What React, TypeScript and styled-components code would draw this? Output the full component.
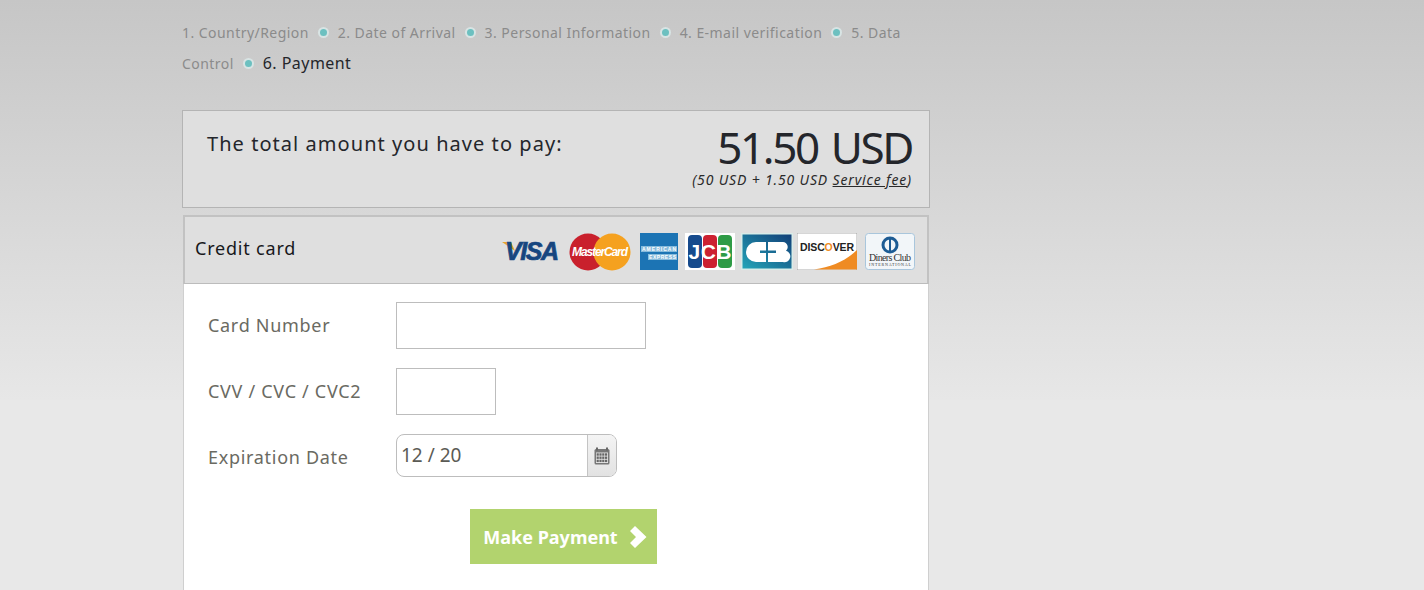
import React from "react"
import styled, { createGlobalStyle } from "styled-components"

const STEPS = ["1. Country/Region", "2. Date of Arrival", "3. Personal Information", "4. E-mail verification"]

const GlobalStyle = createGlobalStyle`
   html, body {
      margin: 0;
      padding: 0;
      height: 590px;
      overflow: hidden;
   }
   body {
      font-family: "Noto Sans", "Open Sans", sans-serif;
      background: linear-gradient(to bottom, #c6c6c6 0, #e7e7e7 400px, #e8e8e8 400px, #e8e8e8 590px);
   }
`

function VisaLogo() {
   return (
      <svg width="58" height="28" viewBox="0 0 58 28">
         <path d="M0 4 L9 4 L13 13 Z" fill="#e6a52d" />
         <text x="3" y="22" fontFamily="Liberation Sans" fontSize="25" fontWeight="700" fontStyle="italic" fill="#17467f" stroke="#17467f" strokeWidth="0.7" textLength="54">
            VISA
         </text>
      </svg>
   )
}

function MasterCardLogo() {
   return (
      <svg width="62" height="38" viewBox="0 0 62 38">
         <circle cx="19" cy="19" r="18.5" fill="#c9202c" />
         <circle cx="43" cy="19" r="18.5" fill="#f5a11f" />
         <text x="31" y="23" textAnchor="middle" fontFamily="Liberation Sans" fontSize="12" fontWeight="700" fontStyle="italic" fill="#fff" textLength="56">
            MasterCard
         </text>
      </svg>
   )
}

function AmexLogo() {
   return (
      <svg width="38" height="37" viewBox="0 0 38 37">
         <rect width="38" height="37" fill="#1c74b4" />
         <rect x="1" y="13" width="36" height="6" fill="#a9d3ea" opacity="0.75" />
         <rect x="8" y="21" width="29" height="6" fill="#a9d3ea" opacity="0.75" />
         <text x="2" y="18" fontFamily="Liberation Sans" fontSize="5" fontWeight="700" fill="#fff" textLength="34">
            AMERICAN
         </text>
         <text x="9" y="26" fontFamily="Liberation Sans" fontSize="5" fontWeight="700" fill="#fff" textLength="27">
            EXPRESS
         </text>
      </svg>
   )
}

function JcbLogo() {
   return (
      <svg width="50" height="37" viewBox="0 0 50 37">
         <rect width="50" height="37" fill="#fff" />
         <rect x="3" y="2" width="14" height="33" rx="4" fill="#164a8c" />
         <rect x="18" y="2" width="14" height="33" rx="4" fill="#cc2131" />
         <rect x="33" y="2" width="14" height="33" rx="4" fill="#2e9b46" />
         <text x="25" y="26" textAnchor="middle" fontFamily="Liberation Sans" fontSize="21" fontWeight="700" fill="#fff" textLength="43">
            JCB
         </text>
      </svg>
   )
}

function CbLogo() {
   return (
      <svg width="52" height="37" viewBox="0 0 52 37">
         <defs>
            <linearGradient id="cbFill" x1="0" y1="1" x2="1" y2="0">
               <stop offset="0" stopColor="#23a5b8" />
               <stop offset="1" stopColor="#123f78" />
            </linearGradient>
         </defs>
         <rect width="52" height="37" fill="#d8ece8" />
         <rect x="1.5" y="1.5" width="49" height="34" fill="url(#cbFill)" />
         <path d="M25 9 H15 a10 10 0 0 0 0 20 H25 V20 H19 V17.5 H25 Z" fill="#fff" />
         <path d="M27 9 H42 a5 5 0 0 1 3 8.7 a5.5 5.5 0 0 1 -3 11.3 H27 V20 H35 V17.5 H27 Z" fill="#fff" />
      </svg>
   )
}

function DiscoverLogo() {
   return (
      <svg width="60" height="37" viewBox="0 0 60 37">
         <rect width="60" height="37" fill="#fff" stroke="#777" strokeWidth="0.6" />
         <path d="M60 17 V36.5 H17 C35 34 50 27 60 17 Z" fill="#ef8b23" />
         <text x="30" y="18" textAnchor="middle" fontFamily="Liberation Sans" fontSize="10.5" fontWeight="700" fill="#222" textLength="54">
            DISC<tspan fill="#ef8b23">O</tspan>VER
         </text>
      </svg>
   )
}

function DinersLogo() {
   return (
      <svg width="50" height="37" viewBox="0 0 50 37">
         <rect x="0.5" y="0.5" width="49" height="36" rx="3" fill="#f2f6f9" stroke="#a9c6dc" />
         <circle cx="25" cy="12" r="8.5" fill="#1d5c94" />
         <circle cx="25" cy="12" r="5.5" fill="#f2f6f9" />
         <rect x="24" y="5.5" width="2" height="13" fill="#1d5c94" />
         <text x="25" y="28" textAnchor="middle" fontFamily="Liberation Serif" fontSize="10" fill="#333" textLength="42">
            Diners Club
         </text>
         <text x="25" y="33" textAnchor="middle" fontFamily="Liberation Serif" fontSize="4" fill="#333" textLength="42">
            INTERNATIONAL
         </text>
      </svg>
   )
}

function CalendarIcon() {
   return (
      <svg width="16" height="18" viewBox="0 0 16 18">
         <rect x="0.5" y="2" width="15" height="15.5" rx="1.5" fill="#777" />
         <rect x="2" y="0.5" width="2" height="3" fill="#666" />
         <rect x="12" y="0.5" width="2" height="3" fill="#666" />
         <rect x="2" y="5.5" width="12" height="10.5" fill="#e8e8e8" />
         {[0, 1, 2, 3].map(col =>
            [0, 1, 2].map(row => (
               <rect
                  key={`${col}-${row}`}
                  x={2.6 + col * 2.8}
                  y={6.3 + row * 3.2}
                  width="2.2"
                  height="2.4"
                  fill="#666"
               />
            ))
         )}
      </svg>
   )
}

function App() {
   return (
      <>
         <GlobalStyle />
         <Page>
            <Steps>
               {STEPS.map((step, index) => (
                  <React.Fragment key={index}>
                     <Step>{step}</Step>
                     <Dot />
                  </React.Fragment>
               ))}
               <Step>5. Data</Step> <Step>Control</Step>
               <Dot />
               <Step $active>6. Payment</Step>
            </Steps>

            <TotalBox>
               <TotalLabel>The total amount you have to pay:</TotalLabel>
               <TotalRight>
                  <Amount>51.50 USD</Amount>
                  <Breakdown>
                     (50 USD + 1.50 USD <u>Service fee</u>)
                  </Breakdown>
               </TotalRight>
            </TotalBox>

            <CardHeader>
               <CardTitle>Credit card</CardTitle>
               <Logos>
                  <LogoSlot $gap={0}><VisaLogo /></LogoSlot>
                  <LogoSlot $gap={9}><MasterCardLogo /></LogoSlot>
                  <LogoSlot $gap={9}><AmexLogo /></LogoSlot>
                  <LogoSlot $gap={7}><JcbLogo /></LogoSlot>
                  <LogoSlot $gap={6}><CbLogo /></LogoSlot>
                  <LogoSlot $gap={4}><DiscoverLogo /></LogoSlot>
                  <LogoSlot $gap={8}><DinersLogo /></LogoSlot>
               </Logos>
            </CardHeader>

            <FormPanel>
               <Row>
                  <Label>Card Number</Label>
                  <TextBox $width={250} />
               </Row>
               <Row>
                  <Label>CVV / CVC / CVC2</Label>
                  <TextBox $width={100} />
               </Row>
               <Row>
                  <Label>Expiration Date</Label>
                  <DateField>
                     <DateValue>12 / 20</DateValue>
                     <DateButton>
                        <CalendarIcon />
                     </DateButton>
                  </DateField>
               </Row>
               <PayButton>
                  Make Payment
                  <svg width="17" height="22" viewBox="0 0 17 22">
                     <path d="M0 5 L5 0 L16.5 11 L5 22 L0 17 L6 11 Z" fill="#fff" />
                  </svg>
               </PayButton>
            </FormPanel>
         </Page>
      </>
   )
}

const Page = styled.div`
   width: 748px;
   margin-left: 182px;
   padding-top: 17px;
`

const Steps = styled.div`
   width: 730px;
   line-height: 31px;
   font-size: 14px;
   letter-spacing: 0.45px;
   margin-bottom: 31px;
`

const Step = styled.span<{ $active?: boolean }>`
   color: ${({ $active }) => ($active ? "#24262b" : "#8b8b8b")};
   font-size: ${({ $active }) => ($active ? "16px" : "14px")};
`

const Dot = styled.span`
   display: inline-block;
   width: 7px;
   height: 7px;
   margin: 0 11px 2px 11px;
   border-radius: 50%;
   background: #6cc0c0;
   box-shadow: 0 0 0 2px #d8e4e4;
`

const TotalBox = styled.div`
   box-sizing: border-box;
   height: 98px;
   display: flex;
   justify-content: space-between;
   padding: 14px 17px 0 24px;
   background: #dfdfdf;
   border: 1px solid #b4b4b4;
`

const TotalLabel = styled.div`
   font-size: 20px;
   letter-spacing: 1.05px;
   line-height: 38px;
   color: #24262b;
`

const TotalRight = styled.div`
   text-align: right;
`

const Amount = styled.div`
   font-size: 44px;
   line-height: 44px;
   letter-spacing: -2.4px;
   word-spacing: 4px;
   color: #24262b;
`

const Breakdown = styled.div`
   font-size: 14px;
   font-style: italic;
   letter-spacing: 0.85px;
   line-height: 22px;
   color: #2a2a2a;
`

const CardHeader = styled.div`
   box-sizing: border-box;
   width: 746px;
   height: 69px;
   margin: 7px 0 0 1px;
   display: flex;
   align-items: center;
   justify-content: space-between;
   padding: 0 12px 0 10px;
   background: #dfdfdf;
   border: 2px solid #c2c2c2;
   border-bottom: 1px solid #bcbcbc;
`

const CardTitle = styled.div`
   font-size: 18px;
   letter-spacing: 0.8px;
   padding-bottom: 5px;
   color: #17181c;
`

const Logos = styled.div`
   display: flex;
   align-items: center;
   padding-top: 3px;
`

const LogoSlot = styled.div<{ $gap: number }>`
   display: flex;
   margin-left: ${({ $gap }) => $gap}px;
`

const FormPanel = styled.div`
   box-sizing: border-box;
   width: 746px;
   height: 320px;
   margin-left: 1px;
   padding: 18px 0 0 24px;
   background: #fff;
   border: 1px solid #cfcfcf;
   border-top: 0;
`

const Row = styled.div`
   display: flex;
   align-items: flex-start;
   margin-bottom: 19px;
`

const Label = styled.div`
   width: 188px;
   padding-top: 12px;
   font-size: 18px;
   line-height: 22px;
   letter-spacing: 0.7px;
   color: #6a6a62;
`

const TextBox = styled.div<{ $width: number }>`
   box-sizing: border-box;
   width: ${({ $width }) => $width}px;
   height: 47px;
   background: #fff;
   border: 1px solid #bdbdbd;
`

const DateField = styled.div`
   box-sizing: border-box;
   width: 221px;
   height: 43px;
   display: flex;
   background: #fff;
   border: 1px solid #bdbdbd;
   border-radius: 8px;
   overflow: hidden;
`

const DateValue = styled.div`
   flex: 1;
   padding-left: 4px;
   font-size: 19px;
   line-height: 40px;
   color: #5b5b55;
`

const DateButton = styled.div`
   width: 28px;
   display: flex;
   align-items: center;
   justify-content: center;
   background: linear-gradient(to bottom, #f4f4f4, #e2e2e2);
   border-left: 1px solid #c4c4c4;
`

const PayButton = styled.div`
   box-sizing: border-box;
   width: 187px;
   height: 55px;
   margin: 32px 0 0 262px;
   padding-left: 3px;
   display: flex;
   align-items: center;
   justify-content: center;
   gap: 12px;
   font-size: 18px;
   font-weight: 700;
   color: #fff;
   background: #b2d36e;
`

export default App
